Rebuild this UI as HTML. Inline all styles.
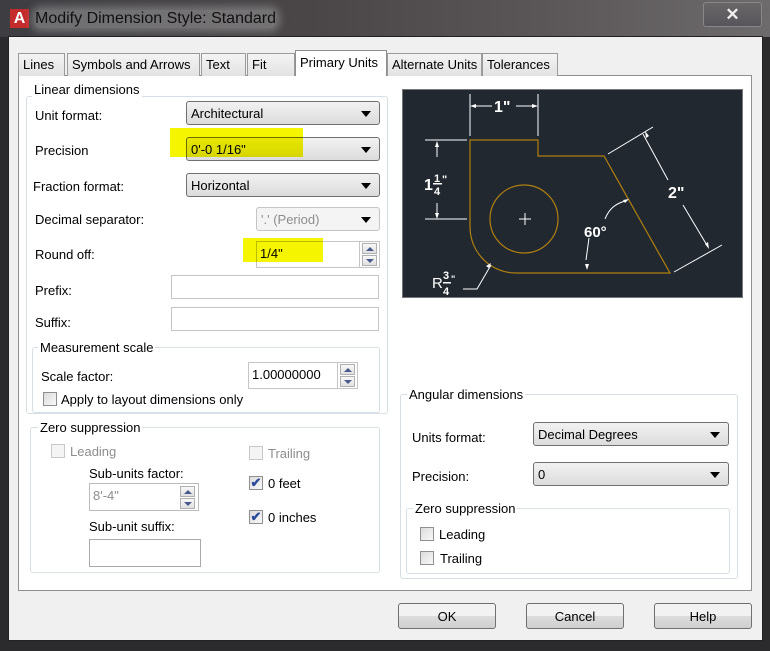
<!DOCTYPE html>
<html><head><style>
*{box-sizing:border-box;margin:0;padding:0}
body{width:770px;height:651px;overflow:hidden;background:#2b2b2e;font-family:"Liberation Sans",sans-serif;font-size:13px;color:#000;position:relative}
.a{position:absolute}
#title{left:0;top:0;width:770px;height:37px;background:linear-gradient(90deg,#3e3e42,#4a4648 40%,#5a5658 70%,#6e6b6c);}
#client{left:8px;top:36px;width:755px;height:605px;background:#f0f0f0;border:1px solid #222}
.tab{top:53px;height:23px;background:linear-gradient(#f4f4f4,#e2e2e2);border:1px solid #9a9a9a;border-bottom:none;padding:3px 4px 0;font-size:13px;white-space:nowrap}
#panel{left:18px;top:75px;width:734px;height:516px;background:#fff;border:1px solid #8e8f8f}
.grp{border:1px solid #d5dfe5;border-radius:3px}
.gl{background:#fff;padding:0 2px;white-space:nowrap}
.cb{height:24px;border:1px solid #707070;border-radius:3px;background:linear-gradient(#f2f2f2,#dcdcdc);padding:4px 4px;white-space:nowrap}
.cb:after{content:"";position:absolute;right:8px;top:9px;border-left:5px solid transparent;border-right:5px solid transparent;border-top:6px solid #000}
.tb{border:1px solid #c5c5c5;background:#fff;height:24px;padding:4px 3px}
.spin{right:0;top:0;width:20px;height:100%;border-left:1px solid #c5c5c5}
.spin i{position:absolute;left:2px;width:15px;height:11px;border:1px solid #b0b0b0;background:linear-gradient(#f8f8f8,#e0e0e0)}
.spin i:after{content:"";position:absolute;left:3px;top:3px;border-left:4px solid transparent;border-right:4px solid transparent}
.spin i.u:after{border-bottom:4px solid #4a5a8a}
.spin i.dn:after{border-top:4px solid #4a5a8a}
.ck{width:14px;height:14px;border:1px solid #8f8f8f;background:linear-gradient(135deg,#dcdcdc,#f8f8f8)}
.ck.d{border-color:#c8c8c8;background:#f4f4f4}
.btn{top:603px;width:98px;height:26px;border:1px solid #707070;border-radius:3px;background:linear-gradient(#f2f2f2 50%,#dddddd 50%,#cfcfcf);text-align:center;padding-top:5px}
.dis{color:#8d8d8d}
.hl{background:#f5f500;mix-blend-mode:multiply}
</style></head><body>
<div id="title" class="a"></div>
<div class="a" style="left:10px;top:9px;width:19px;height:19px;background:#c42b2b;color:#fff;font-weight:bold;font-size:16px;text-align:center;line-height:19px">A</div>
<div class="a" style="left:35px;top:10px;font-size:16px;color:#111;background:rgba(200,200,200,.35);box-shadow:0 0 8px 4px rgba(200,200,200,.35);border-radius:6px">Modify Dimension Style: Standard</div>
<div class="a" style="left:703px;top:2px;width:59px;height:25px;border:1px solid #888;border-radius:3px;background:linear-gradient(#6a6768,#57555a);color:#eee;font-weight:bold;font-size:17px;text-align:center;line-height:23px">✕</div>
<div id="client" class="a"></div>
<div id="panel" class="a"></div>
<div class="a tab" style="left:18px;width:47px">Lines</div>
<div class="a tab" style="left:67px;width:133px">Symbols and Arrows</div>
<div class="a tab" style="left:201px;width:45px">Text</div>
<div class="a tab" style="left:247px;width:48px">Fit</div>
<div class="a tab" style="left:295px;top:50px;height:26px;width:92px;background:#fff;border-color:#8e8f8f;padding-top:4px">Primary Units</div>
<div class="a tab" style="left:387px;width:95px">Alternate Units</div>
<div class="a tab" style="left:482px;width:76px">Tolerances</div>

<div class="a grp" style="left:26px;top:96px;width:362px;height:318px"></div>
<div class="a gl" style="left:32px;top:82px">Linear dimensions</div>
<div class="a" style="left:35px;top:108px">Unit format:</div>
<div class="a cb" style="left:186px;top:101px;width:194px">Architectural</div>
<div class="a" style="left:35px;top:143px">Precision</div>
<div class="a cb" style="left:186px;top:137px;width:194px">0'-0 1/16"</div>
<div class="a hl" style="left:170px;top:128px;width:133px;height:29px"></div>
<div class="a" style="left:33px;top:179px">Fraction format:</div>
<div class="a cb" style="left:186px;top:173px;width:194px">Horizontal</div>
<div class="a" style="left:35px;top:212px">Decimal separator:</div>
<div class="a cb dis" style="left:256px;top:207px;width:124px;border-color:#c5c5c5;background:#f4f4f4">'.' (Period)</div>
<div class="a" style="left:35px;top:247px">Round off:</div>
<div class="a tb" style="left:256px;top:241px;width:124px;height:27px">1/4"<div class="a spin"><i class="u" style="top:1px"></i><i class="dn" style="top:13px"></i></div></div>
<div class="a hl" style="left:243px;top:238px;width:80px;height:24px"></div>
<div class="a" style="left:35px;top:283px">Prefix:</div>
<div class="a tb" style="left:171px;top:275px;width:208px"></div>
<div class="a" style="left:35px;top:315px">Suffix:</div>
<div class="a tb" style="left:171px;top:307px;width:208px"></div>

<div class="a grp" style="left:32px;top:347px;width:348px;height:66px"></div>
<div class="a gl" style="left:38px;top:340px">Measurement scale</div>
<div class="a" style="left:41px;top:369px">Scale factor:</div>
<div class="a tb" style="left:248px;top:362px;width:110px;height:27px">1.00000000<div class="a spin"><i class="u" style="top:1px"></i><i class="dn" style="top:13px"></i></div></div>
<div class="a ck" style="left:43px;top:392px"></div>
<div class="a" style="left:61px;top:392px">Apply to layout dimensions only</div>

<div class="a grp" style="left:30px;top:427px;width:350px;height:146px"></div>
<div class="a gl" style="left:38px;top:420px">Zero suppression</div>
<div class="a ck d" style="left:51px;top:444px"></div>
<div class="a dis" style="left:70px;top:444px">Leading</div>
<div class="a ck d" style="left:249px;top:446px"></div>
<div class="a dis" style="left:268px;top:446px">Trailing</div>
<div class="a" style="left:89px;top:466px">Sub-units factor:</div>
<div class="a tb dis" style="left:89px;top:483px;width:110px;height:28px;border-color:#bbb">8'-4"<div class="a spin" style="border:none"><i class="u" style="top:2px"></i><i class="dn" style="top:14px"></i></div></div>
<div class="a" style="left:89px;top:519px">Sub-unit suffix:</div>
<div class="a tb" style="left:89px;top:539px;width:112px;height:28px;border-color:#aaa"></div>
<div class="a ck" style="left:249px;top:476px;color:#2b4a9a;font-size:13px;line-height:12px;font-weight:bold;text-align:center">✔</div>
<div class="a" style="left:268px;top:476px">0 feet</div>
<div class="a ck" style="left:249px;top:510px;color:#2b4a9a;font-size:13px;line-height:12px;font-weight:bold;text-align:center">✔</div>
<div class="a" style="left:268px;top:510px">0 inches</div>

<svg class="a" style="left:402px;top:89px" width="341" height="209" viewBox="402 89 341 209">
<rect x="402.5" y="89.5" width="340" height="208" fill="#212830" stroke="#777"/>
<g fill="none" stroke="#b08010" stroke-width="1.2">
<path d="M470 140 H538 V156 H604 L670 273 H516 A46 46 0 0 1 470 227 Z" stroke-linejoin="miter"/>
<circle cx="524" cy="219" r="34"/>
</g>
<g stroke="#fff" fill="none" stroke-width="1">
<path d="M519 219h12M525 213v12"/>
<path d="M470 94v42M538 94v42M472 106h20M516 106h20"/>
<path d="M425 140h42M425 219h42M437 143v14M437 203v14"/>
<path d="M608 154l45-27M674 272l48-27M643 134l25 46M683 205l25 42"/>
<path d="M605 219c4-10 10-15 20-18M586 260l3-22M463 289h14l14-24"/>
</g>
<g fill="#fff">
<path d="M470 106l6-2v4zM538 106l-6-2v4zM437 141l-2 6h4zM437 219l-2-6h4zM645 131l1 7 3-2zM709 249l-1-7-3 2zM629 199l-6 1 2 3zM587 270l-2-6h4zM491 263l-5 3 3 2z"/>
</g>
<g fill="#fff" font-family="Liberation Sans,sans-serif" font-weight="bold">
<text x="494" y="112" font-size="16">1"</text>
<text x="424" y="190" font-size="16">1</text>
<text x="434" y="182" font-size="11">1</text><rect x="433" y="183" width="9" height="1.5"/>
<text x="434" y="195" font-size="11">4</text><text x="442" y="183" font-size="11">"</text>
<text x="668" y="198" font-size="16">2"</text>
<text x="584" y="237" font-size="15">60°</text>
<text x="432" y="288" font-size="15" font-weight="normal">R</text>
<text x="443" y="279" font-size="11">3</text><rect x="443" y="282" width="8" height="1.5"/>
<text x="443" y="295" font-size="11">4</text><text x="451" y="282" font-size="9">"</text>
</g>
</svg>

<div class="a grp" style="left:400px;top:394px;width:338px;height:185px"></div>
<div class="a gl" style="left:407px;top:387px">Angular dimensions</div>
<div class="a" style="left:412px;top:430px">Units format:</div>
<div class="a cb" style="left:533px;top:422px;width:196px">Decimal Degrees</div>
<div class="a" style="left:412px;top:469px">Precision:</div>
<div class="a cb" style="left:533px;top:462px;width:196px">0</div>
<div class="a grp" style="left:406px;top:508px;width:324px;height:66px"></div>
<div class="a gl" style="left:413px;top:501px">Zero suppression</div>
<div class="a ck" style="left:420px;top:527px"></div>
<div class="a" style="left:439px;top:527px">Leading</div>
<div class="a ck" style="left:420px;top:551px"></div>
<div class="a" style="left:440px;top:551px">Trailing</div>

<div class="a btn" style="left:398px">OK</div>
<div class="a btn" style="left:526px">Cancel</div>
<div class="a btn" style="left:654px">Help</div>
</body></html>
